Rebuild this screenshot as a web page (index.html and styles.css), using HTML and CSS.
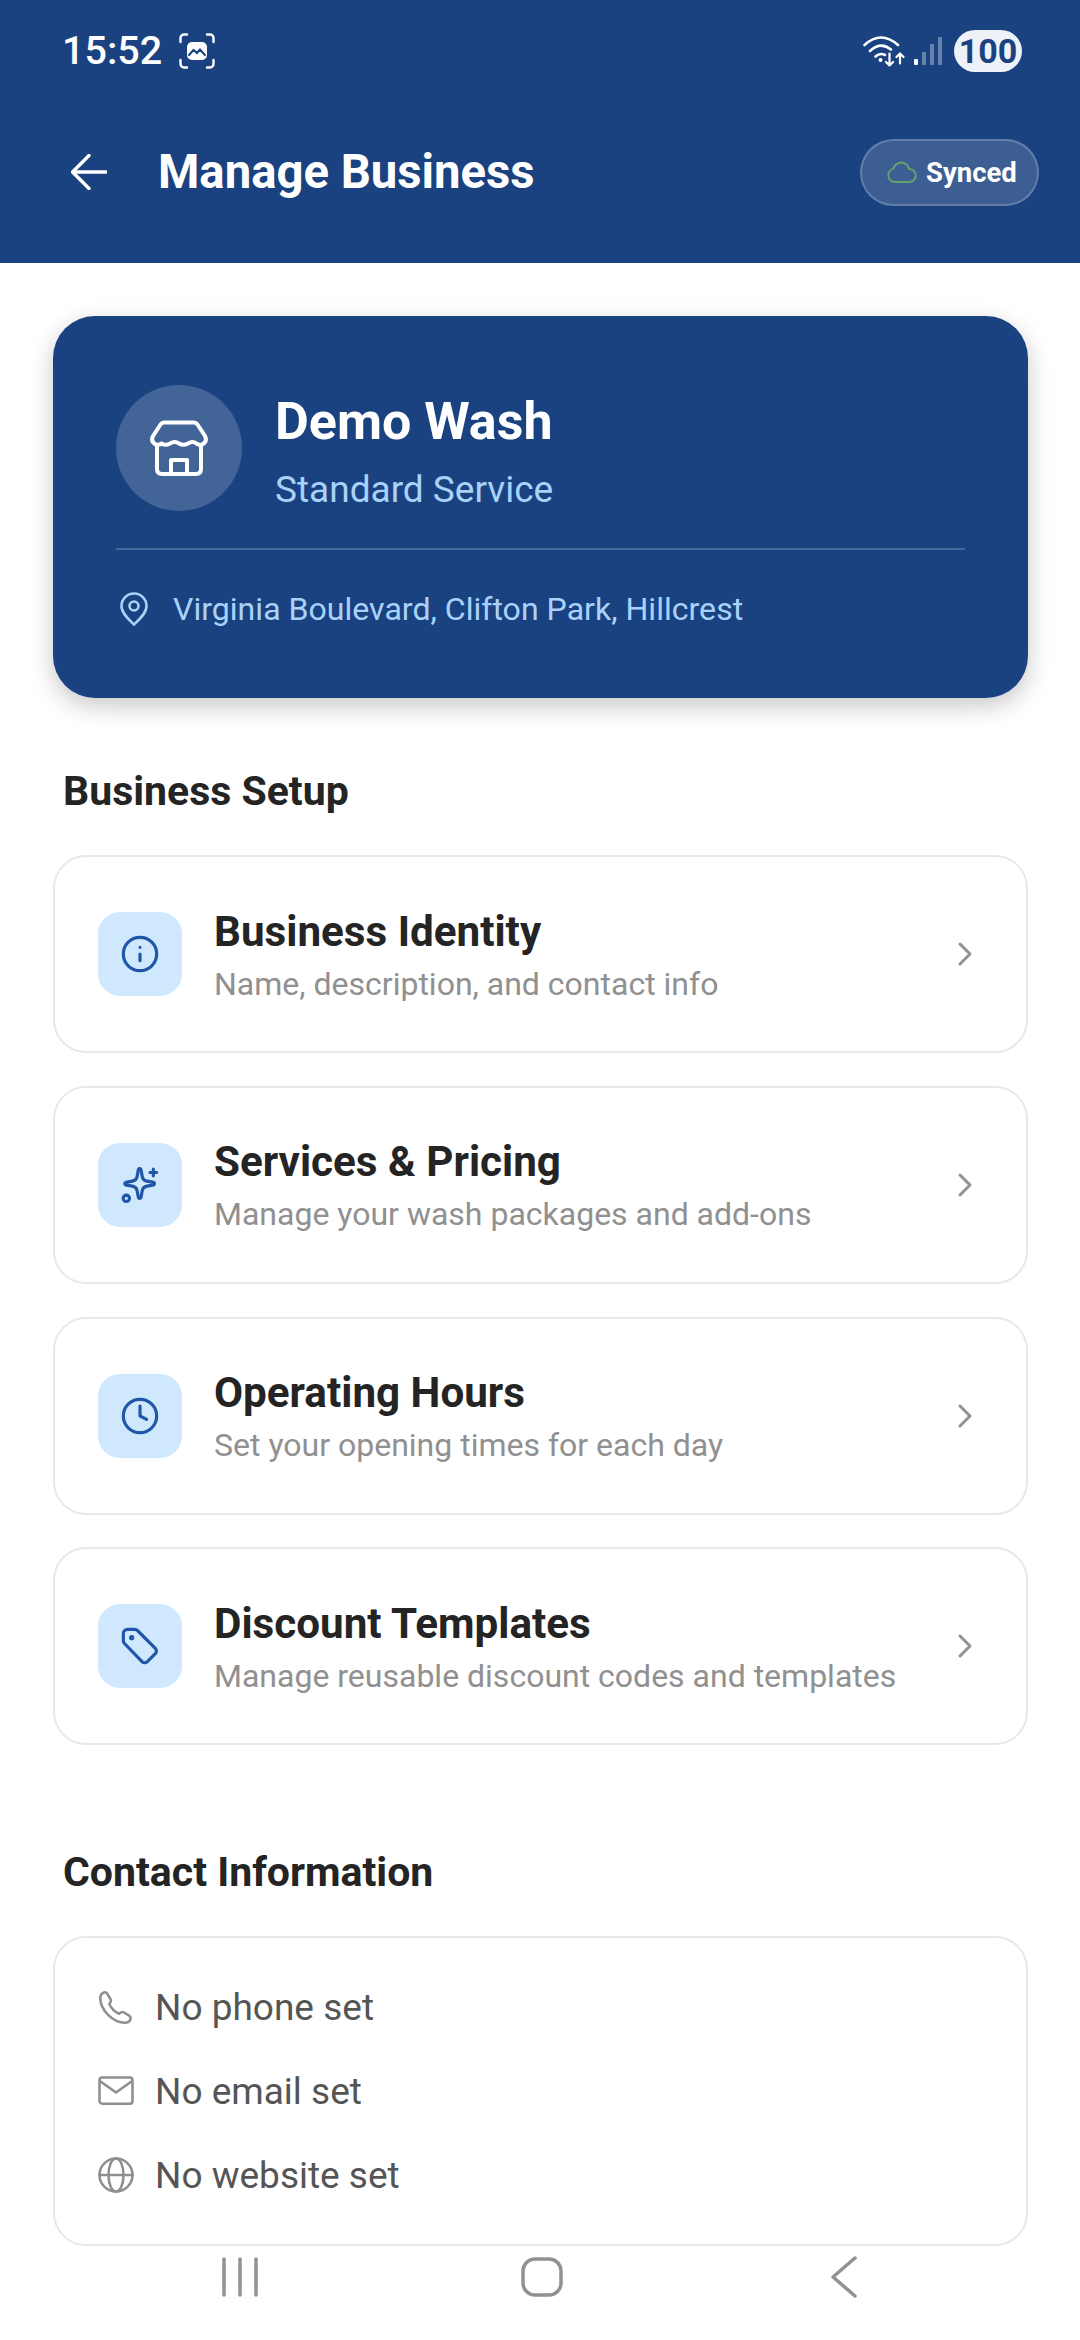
FILE: index.html
```html
<!DOCTYPE html>
<html lang="en">
<head>
<meta charset="utf-8">
<title>Manage Business</title>
<link rel="stylesheet" href="styles.css">
</head>
<body>
<div class="screen">
  <header class="header">
    <div class="status">
      <div class="status-left">
        <span class="time">15:52</span>
        <svg class="shot" viewBox="0 0 36 36" fill="none" stroke="#fff" stroke-width="2.4" stroke-linecap="round"><path d="M8 1.500H5A3.500 3.500 0 0 0 1.500 5v4M28 1.500h3A3.500 3.500 0 0 1 34.500 5v4M8 34.500H5A3.500 3.500 0 0 1 1.500 31v-4M28 34.500h3a3.500 3.500 0 0 0 3.500-3.500v-4"/><rect x="8" y="9" width="20" height="18" rx="5" fill="#fff" stroke="none"/><path d="M10 22l4.500-5 3.500 3 3-3.500 5 5.500" stroke="#1a4280" stroke-width="2" fill="none"/></svg>
      </div>
      <div class="status-right">
        <svg class="wifi" viewBox="0 0 42 32" fill="none" stroke="#fff" stroke-width="2.600" stroke-linecap="round" stroke-linejoin="round"><path d="M1.500 10Q18 -5 35 10M7 16Q17.500 6 28 14.500M12.500 21.500Q17 17.500 22 20"/><circle cx="17.500" cy="25" r="2" fill="#fff" stroke="none"/><path stroke-width="2.200" d="M26.500 18.500v12M23 27l3.500 3.500L30 27M37 28.500V18.500M33.500 22l3.500-3.500 3.500 3.500"/></svg>
        <svg class="signal" viewBox="0 0 30 30"><rect x="1" y="23" width="4" height="6" rx="1" fill="#fff"/><rect x="9" y="16" width="4" height="13" rx="1" fill="#fff" opacity=".35"/><rect x="17" y="8" width="4" height="21" rx="1" fill="#fff" opacity=".35"/><rect x="25" y="1" width="4" height="28" rx="1" fill="#fff" opacity=".35"/></svg>
        <span class="battery">100</span>
      </div>
    </div>
    <div class="toolbar">
      <svg class="back" viewBox="0 0 36 36" fill="none" stroke="#fff" stroke-width="3.400" stroke-linecap="round" stroke-linejoin="round"><path d="M35 18H2M18 1.500 1.500 18 18 34.500"/></svg>
      <h1 class="page-title">Manage Business</h1>
      <div class="sync">
        <svg class="cloud" viewBox="0 0 30 22" fill="none" stroke="#63a36b" stroke-width="2"><path d="M8 21a6.800 6.800 0 0 1-1.500-13.400A9 9 0 0 1 14 1.500a8.500 8.500 0 0 1 8 6.500 6.500 6.500 0 0 1 .5 13z"/></svg>
        <span>Synced</span>
      </div>
    </div>
  </header>

  <main class="main">
    <section class="hero">
      <div class="hero-top">
        <div class="avatar">
          <svg class="store" viewBox="0 0 58 56" fill="none" stroke="#fff" stroke-width="4" stroke-linecap="round" stroke-linejoin="round"><path d="M14 2.500H44Q46 2.500 47.500 4.500L55 16Q57.500 21 53 24Q50 26 46.500 23.500Q42.500 20.500 38 23.500Q33.500 26 29 23.500Q24.500 20.500 20 23.500Q15.500 26 11.500 23.500Q8 26 5 24Q.5 21 3 16L10.500 4.500Q12 2.500 14 2.500Z"/><path d="M7 26V49Q7 54 12 54H46Q51 54 51 49V26"/><path d="M21 54V40H37V54"/></svg>
        </div>
        <div>
          <div class="hero-name">Demo Wash</div>
          <div class="hero-type">Standard Service</div>
        </div>
      </div>
      <div class="hero-addr">
        <svg class="pin" viewBox="0 0 28 34" fill="none" stroke="#a9d2fa" stroke-width="2.600" stroke-linejoin="round"><path d="M14 32.500C9 27.500 1.500 21.500 1.500 14a12.500 12.500 0 0 1 25 0C26.500 21.500 19 27.500 14 32.500Z"/><circle cx="14" cy="14" r="4.500"/></svg>
        <span>Virginia Boulevard, Clifton Park, Hillcrest</span>
      </div>
    </section>

    <h2 class="section-title setup">Business Setup</h2>
    <div class="list">
      <a class="row">
        <span class="row-icon"><svg viewBox="0 0 24 24"><circle cx="12" cy="12" r="10"/><path d="M12 16v-4M12 8h.01"/></svg></span>
        <span class="row-text"><span class="row-title">Business Identity</span><span class="row-sub">Name, description, and contact info</span></span>
        <svg class="chev" viewBox="0 0 16 26"><path d="M3 3 13 13 3 23"/></svg>
      </a>
      <a class="row">
        <span class="row-icon"><svg viewBox="0 0 24 24"><path d="M9.900 3.900c.3-1.600 1.500-1.600 1.800 0l.6 3.400a3.500 3.500 0 0 0 2.900 2.900l3.300.6c1.600.3 1.600 1.500 0 1.800l-3.300.6a3.500 3.500 0 0 0-2.900 2.900l-.6 3.300c-.3 1.600-1.500 1.600-1.800 0l-.6-3.300a3.500 3.500 0 0 0-2.900-2.900l-3.300-.6c-1.600-.3-1.600-1.500 0-1.800l3.300-.6a3.500 3.500 0 0 0 2.900-2.900z" transform="translate(1 -.5)"/><path d="M20 2.500v4M18 4.500h4"/><circle cx="3.800" cy="20" r="1.900"/></svg></span>
        <span class="row-text"><span class="row-title">Services &amp; Pricing</span><span class="row-sub">Manage your wash packages and add-ons</span></span>
        <svg class="chev" viewBox="0 0 16 26"><path d="M3 3 13 13 3 23"/></svg>
      </a>
      <a class="row">
        <span class="row-icon"><svg viewBox="0 0 24 24"><circle cx="12" cy="12" r="10"/><path d="M12 6v6l4 2"/></svg></span>
        <span class="row-text"><span class="row-title">Operating Hours</span><span class="row-sub">Set your opening times for each day</span></span>
        <svg class="chev" viewBox="0 0 16 26"><path d="M3 3 13 13 3 23"/></svg>
      </a>
      <a class="row">
        <span class="row-icon"><svg viewBox="0 0 24 24"><path d="M2 4.500A2.500 2.500 0 0 1 4.500 2h4.200a2.500 2.500 0 0 1 1.800.7l10.700 10.700a2.300 2.300 0 0 1 0 3.200l-4.800 4.800a2.300 2.300 0 0 1-3.200 0L2.700 10.500A2.500 2.500 0 0 1 2 8.700z"/><circle cx="7" cy="7" r=".6" fill="#1f56a8"/></svg></span>
        <span class="row-text"><span class="row-title">Discount Templates</span><span class="row-sub">Manage reusable discount codes and templates</span></span>
        <svg class="chev" viewBox="0 0 16 26"><path d="M3 3 13 13 3 23"/></svg>
      </a>
    </div>

    <h2 class="section-title contact-head">Contact Information</h2>
    <section class="contact">
      <div class="contact-row"><svg viewBox="0 0 24 24"><path d="M14 16.500c1.200-.9 2-1.600 3-1l3.800 2.300c.7.500 1.200 1.200.9 2.200-.6 1.700-1.800 2.500-3.700 2.500C10 22.500 1.500 14 1.500 6c0-1.900.8-3.100 2.500-3.700 1-.3 1.700.2 2.200.9l2.300 3.800c.6 1-.1 1.800-1 3 1.300 2.800 3.700 5.200 6.500 6.500z"/></svg><span>No phone set</span></div>
      <div class="contact-row"><svg viewBox="0 0 24 24"><rect x="1" y="3" width="22" height="17.500" rx="1.800"/><path d="M1.500 5.500 12 13l10.500-7.500"/></svg><span>No email set</span></div>
      <div class="contact-row"><svg viewBox="0 0 24 24"><circle cx="12" cy="12" r="11"/><ellipse cx="12" cy="12" rx="5" ry="11"/><path d="M1 12h22"/></svg><span>No website set</span></div>
    </section>
  </main>

  <nav class="nav">
    <svg class="nav-recent" viewBox="0 0 36 40"><path d="M2 2v36M18 2v36M34 2v36"/></svg>
    <svg class="nav-home" viewBox="0 0 42 40"><rect x="2" y="2" width="38" height="36" rx="12"/></svg>
    <svg class="nav-back" viewBox="0 0 26 42"><path d="M24 2 2 21l22 19"/></svg>
  </nav>
</div>
</body>
</html>
```
FILE: styles.css
```css
* { box-sizing: border-box; }
html, body { margin: 0; padding: 0; background: #fff; }
body { font-family: Roboto, "Liberation Sans", sans-serif; }
h1, h2 { margin: 0; }
.screen { width: 1080px; height: 2340px; overflow: hidden; display: flex; flex-direction: column; background: #fff; }

.header { height: 263px; background: #1a4280; color: #fff; flex: none; }
.status { height: 100px; padding: 30px 58px 0 62px; display: flex; justify-content: space-between; align-items: flex-start; }
.status-left { display: flex; align-items: center; gap: 17px; height: 42px; }
.time { font-size: 39.500px; font-weight: 500; line-height: 42px; }
.shot { width: 36px; height: 36px; }
.status-right { display: flex; align-items: center; height: 42px; }
.wifi { width: 42px; height: 32px; }
.signal { width: 30px; height: 30px; margin-left: 8px; }
.battery { width: 68px; height: 42px; margin-left: 11px; border-radius: 21px; background: #eef1f8; color: #1a4280; font-size: 34px; font-weight: 700; line-height: 42px; text-align: center; }

.toolbar { height: 163px; padding: 0 41px 19px 71px; display: flex; align-items: center; }
.back { width: 36px; height: 36px; flex: none; }
.page-title { font-size: 47.250px; font-weight: 700; line-height: 60px; margin-left: 51px; flex: 1; }
.sync { width: 179px; height: 67px; border: 2px solid rgba(255,255,255,.2); border-radius: 34px; background: rgba(255,255,255,.15); display: flex; align-items: center; padding-left: 25px; gap: 9px; font-size: 27.500px; font-weight: 700; }
.cloud { width: 30px; height: 22px; }

.main { flex: 1; padding: 53px 52px 0 53px; display: flex; flex-direction: column; }
.hero { height: 382px; border-radius: 42px; background: #1a4280; box-shadow: 0 8px 24px rgba(0,0,0,.22); padding: 69px 63px 0; color: #a9d2fa; flex: none; }
.hero-top { height: 165px; display: flex; gap: 33px; border-bottom: 2px solid rgba(255,255,255,.2); }
.avatar { width: 126px; height: 126px; border-radius: 50%; background: rgba(255,255,255,.18); display: flex; align-items: center; justify-content: center; flex: none; }
.store { width: 58px; height: 56px; }
.hero-name { font-size: 52px; font-weight: 700; color: #fff; line-height: 62px; margin-top: 6px; }
.hero-type { font-size: 37px; line-height: 44px; margin-top: 15px; }
.hero-addr { display: flex; align-items: center; gap: 25px; margin-top: 29px; font-size: 32.100px; line-height: 60px; padding-left: 4px; }
.pin { width: 28px; height: 34px; flex: none; }

.section-title { font-size: 41px; font-weight: 700; color: #242424; line-height: 50px; padding-left: 10px; }
.setup { margin-top: 68px; }
.contact-head { margin-top: 101.750px; }

.list { display: flex; flex-direction: column; gap: 32.750px; margin-top: 39px; }
.row { height: 198px; border: 2.500px solid #e8e8e8; border-radius: 33px; display: flex; align-items: center; padding: 0 53px 0 43px; background: #fff; }
.row-icon { width: 84px; height: 84px; border-radius: 22px; background: #d0e8fd; display: flex; align-items: center; justify-content: center; flex: none; margin-right: 32px; }
.row-icon svg { width: 40px; height: 40px; fill: none; stroke: #1f56a8; stroke-width: 1.900; stroke-linecap: round; stroke-linejoin: round; }
.row-text { flex: 1; display: flex; flex-direction: column; padding-top: 3px; }
.row-title { font-size: 42.200px; font-weight: 700; color: #242424; line-height: 50px; }
.row-sub { font-size: 32px; color: #909090; line-height: 42px; margin-top: 6px; }
.chev { width: 16px; height: 26px; fill: none; stroke: #929292; stroke-width: 3; stroke-linecap: round; stroke-linejoin: round; flex: none; }

.contact { height: 310px; border: 2.500px solid #e8e8e8; border-radius: 33px; margin-top: 39px; padding: 27px 43px 0; flex: none; }
.contact-row { height: 84px; display: flex; align-items: center; gap: 21px; font-size: 37px; color: #555; }
.contact-row svg { width: 36px; height: 36px; fill: none; stroke: #8f8f8f; stroke-width: 1.700; stroke-linecap: round; stroke-linejoin: round; flex: none; }

.nav { flex: none; height: 93px; display: grid; grid-template-columns: repeat(3, 302px); justify-content: center; justify-items: center; padding: 9px 0 0 3px; }
.nav svg { fill: none; stroke: #919191; stroke-width: 3.500; stroke-linecap: round; stroke-linejoin: round; height: 42px; }
.nav-recent { width: 36px; }
.nav-home { width: 42px; }
.nav-back { width: 26px; }
```
